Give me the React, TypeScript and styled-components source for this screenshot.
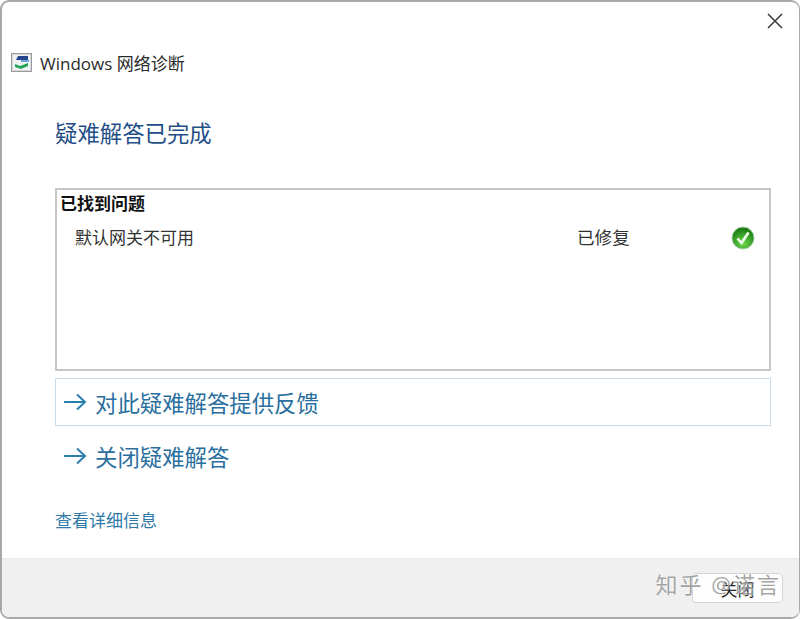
import styled, { createGlobalStyle } from "styled-components";

const cjk = `"Open Sans", "Noto Sans CJK SC", sans-serif`;

const GlobalStyle = createGlobalStyle`
  html, body {
    margin: 0;
    padding: 0;
    background: #fff;
  }
`;

const Frame = styled.div`
  position: relative;
  box-sizing: border-box;
  width: 800px;
  height: 619px;
  display: flex;
  flex-direction: column;
  overflow: hidden;
  background: #fff;
  border: solid #a9a9a9;
  border-width: 2px 1px 2px 2px;
  border-radius: 9px;
  font-family: ${cjk};
  color: #222;
`;

const CloseRow = styled.div`
  display: flex;
  justify-content: flex-end;
  padding: 11px 16px 0 0;
  height: 24px;
  color: #333;
`;

const TitleRow = styled.div`
  display: flex;
  align-items: center;
  gap: 8px;
  margin-top: 13px;
  padding-left: 9px;
  height: 24px;
  font-size: 17px;
  color: #2b2b2b;
`;

const Body = styled.div`
  flex: 1;
  padding: 0 28px 0 53px;
  display: flex;
  flex-direction: column;
`;

const Heading = styled.div`
  margin-top: 43px;
  height: 34px;
  line-height: 34px;
  font-size: 22.4px;
  color: #1f4e87;
`;

const ResultPanel = styled.div`
  box-sizing: border-box;
  margin-top: 37px;
  height: 183px;
  padding: 2px 3px 0;
  border: 2px solid #c6c6c6;
`;

const PanelTitle = styled.div`
  font-size: 17px;
  line-height: 24px;
  font-weight: 700;
  color: #111;
`;

const ProblemRow = styled.div`
  display: flex;
  align-items: center;
  margin-top: 8px;
  padding-left: 15px;
  height: 24px;
  font-size: 17px;
  color: #333;
`;

const ProblemName = styled.span`
  width: 502px;
`;

const ProblemStatus = styled.span`
  width: 154px;
  font-size: 17.6px;
`;

const StatusIcon = styled.span`
  display: flex;
  padding-top: 3px;
`;

const CommandLink = styled.div<{ $boxed?: boolean }>`
  box-sizing: border-box;
  display: flex;
  align-items: center;
  gap: 8px;
  height: 48px;
  padding-left: 8px;
  font-size: 22.4px;
  color: #2a6f9e;
  border: 1px solid ${(p) => (p.$boxed ? "#c9dbe8" : "transparent")};
`;

const LinkList = styled.div`
  margin-top: 7px;
  display: flex;
  flex-direction: column;
  gap: 6px;
`;

const DetailsLink = styled.div`
  margin-top: 29px;
  font-size: 17px;
  line-height: 24px;
  color: #2f79a8;
`;

const Footer = styled.div`
  box-sizing: border-box;
  height: 59px;
  display: flex;
  justify-content: flex-end;
  padding: 14px 16px 0 0;
  background: #f0f0f0;
  border-top: 1px solid #e9e9e9;
`;

const CloseButton = styled.div`
  box-sizing: border-box;
  width: 91px;
  height: 30px;
  display: flex;
  align-items: center;
  justify-content: center;
  background: #fdfdfd;
  border: 1px solid #d4d4d4;
  border-radius: 4px;
  font-size: 17px;
  color: #222;
`;

const Watermark = styled.div`
  position: absolute;
  right: 18px;
  bottom: 18px;
  font-size: 22px;
  line-height: 30px;
  letter-spacing: 2px;
  color: rgba(130, 130, 130, 0.72);
  text-shadow: 0 0 2px #fff;
`;

const ArrowIcon = () => (
  <svg width="23" height="18" viewBox="0 0 23 18" fill="none" stroke="#2a7fae" strokeWidth="2">
    <path d="M0 9h21M13 1.5L21 9l-8 7.5" />
  </svg>
);

const CloseIcon = () => (
  <svg width="16" height="16" viewBox="0 0 16 16" fill="none" stroke="#3a3a3a" strokeWidth="1.5">
    <path d="M1 1l14 14M15 1L1 15" />
  </svg>
);

const NetworkIcon = () => (
  <svg width="21" height="19" viewBox="0 0 21 19">
    <rect x="0.5" y="0.5" width="20" height="18" fill="#d9d9d9" stroke="#9a9a9a" />
    <rect x="2" y="2" width="17" height="15" fill="#eef1f4" />
    <path d="M7 3h10v4H5z" fill="#27458f" />
    <path d="M10 7h8v2h-8z" fill="#6aa6d8" />
    <path d="M4 11l5 2 8-3v3l-7 3-6-2z" fill="#22a552" />
  </svg>
);

const CheckIcon = () => (
  <svg width="24" height="24" viewBox="0 0 24 24">
    <defs>
      <radialGradient id="okFill" cx="50%" cy="75%" r="70%">
        <stop offset="0%" stopColor="#6ed950" />
        <stop offset="100%" stopColor="#16790f" />
      </radialGradient>
    </defs>
    <circle cx="12" cy="12" r="11" fill="url(#okFill)" stroke="#a6cfa6" strokeWidth="1" />
    <path d="M6.5 12.5l4 4.5 7-10.5" fill="none" stroke="#f2fff0" strokeWidth="2.6" />
  </svg>
);

const App = () => {
  return (
    <>
      <GlobalStyle />
      <Frame>
        <CloseRow>
          <CloseIcon />
        </CloseRow>
        <TitleRow>
          <NetworkIcon />
          <span>Windows 网络诊断</span>
        </TitleRow>
        <Body>
          <Heading>疑难解答已完成</Heading>
          <ResultPanel>
            <PanelTitle>已找到问题</PanelTitle>
            <ProblemRow>
              <ProblemName>默认网关不可用</ProblemName>
              <ProblemStatus>已修复</ProblemStatus>
              <StatusIcon>
                <CheckIcon />
              </StatusIcon>
            </ProblemRow>
          </ResultPanel>
          <LinkList>
            <CommandLink $boxed>
              <ArrowIcon />
              对此疑难解答提供反馈
            </CommandLink>
            <CommandLink>
              <ArrowIcon />
              关闭疑难解答
            </CommandLink>
          </LinkList>
          <DetailsLink>查看详细信息</DetailsLink>
        </Body>
        <Footer>
          <CloseButton>关闭</CloseButton>
        </Footer>
        <Watermark>知乎 @诺言</Watermark>
      </Frame>
    </>
  );
};

export default App;
